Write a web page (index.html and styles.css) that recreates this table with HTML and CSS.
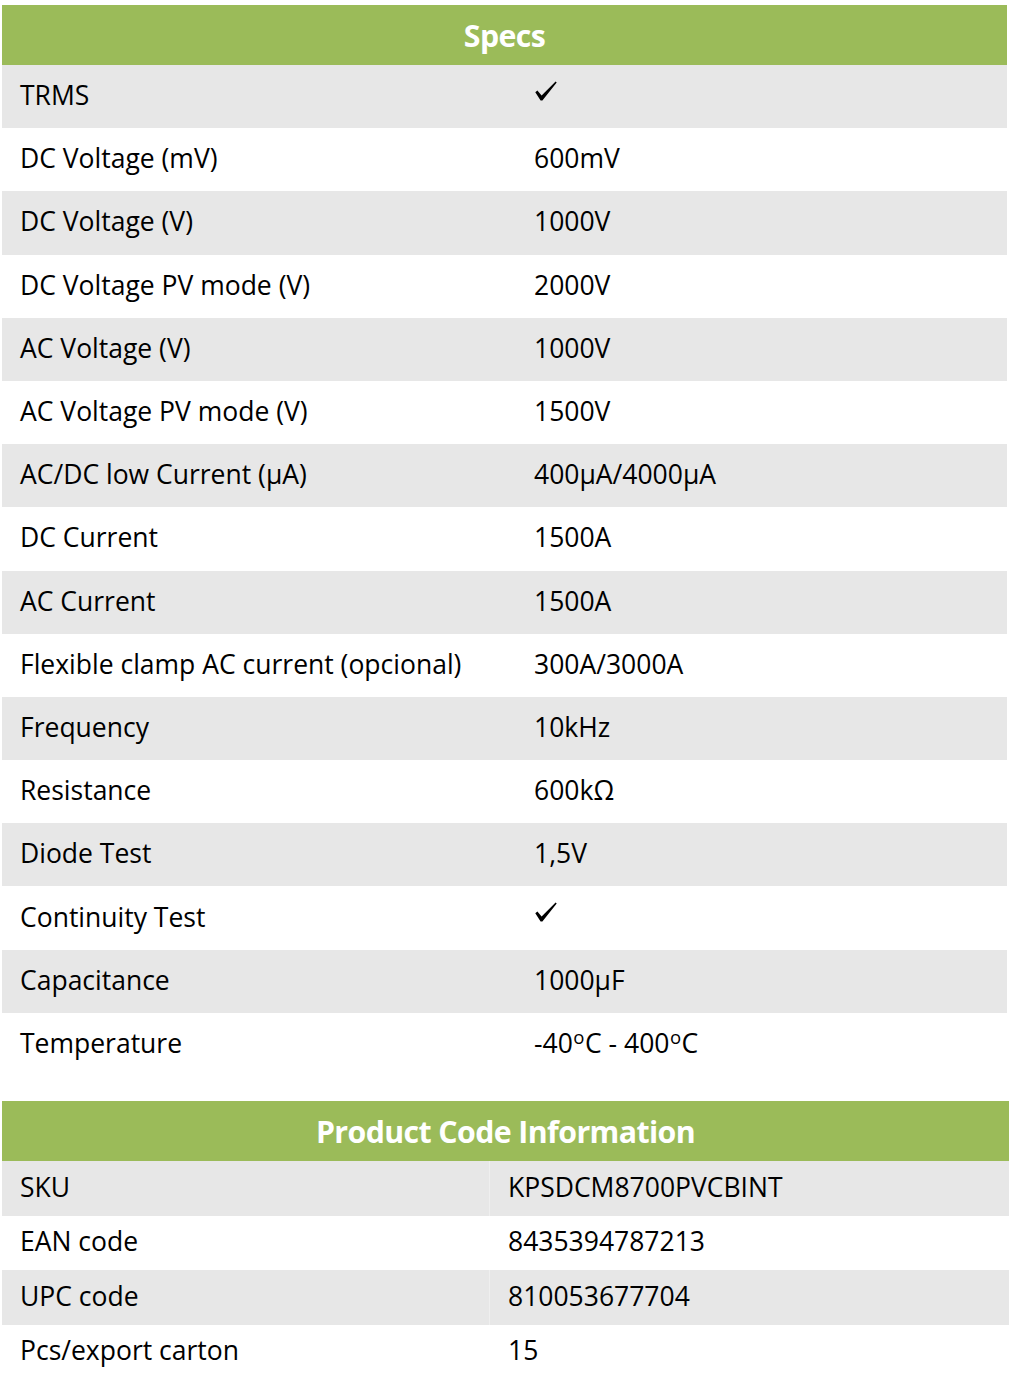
FILE: index.html
```html
<!DOCTYPE html>
<html>
<head>
<meta charset="utf-8">
<link rel="stylesheet" href="styles.css">
</head>
<body>
<section class="table specs">
  <div class="head">Specs</div>
  <div class="row alt"><div class="k">TRMS</div><div class="v"><svg class="check" viewBox="0 0 22 20" width="22" height="20"><path d="M0.3 11.2 L2.4 9.6 L6.6 14.6 L20.6 0.6 L21.7 1.6 L7.4 19.6 L5.6 19.6 Z"/></svg></div></div>
  <div class="row"><div class="k">DC Voltage (mV)</div><div class="v">600mV</div></div>
  <div class="row alt"><div class="k">DC Voltage (V)</div><div class="v">1000V</div></div>
  <div class="row"><div class="k">DC Voltage PV mode (V)</div><div class="v">2000V</div></div>
  <div class="row alt"><div class="k">AC Voltage (V)</div><div class="v">1000V</div></div>
  <div class="row"><div class="k">AC Voltage PV mode (V)</div><div class="v">1500V</div></div>
  <div class="row alt"><div class="k">AC/DC low Current (µA)</div><div class="v">400µA/4000µA</div></div>
  <div class="row"><div class="k">DC Current</div><div class="v">1500A</div></div>
  <div class="row alt"><div class="k">AC Current</div><div class="v">1500A</div></div>
  <div class="row"><div class="k">Flexible clamp AC current (opcional)</div><div class="v">300A/3000A</div></div>
  <div class="row alt"><div class="k">Frequency</div><div class="v">10kHz</div></div>
  <div class="row"><div class="k">Resistance</div><div class="v">600kΩ</div></div>
  <div class="row alt"><div class="k">Diode Test</div><div class="v">1,5V</div></div>
  <div class="row"><div class="k">Continuity Test</div><div class="v"><svg class="check" viewBox="0 0 22 20" width="22" height="20"><path d="M0.3 11.2 L2.4 9.6 L6.6 14.6 L20.6 0.6 L21.7 1.6 L7.4 19.6 L5.6 19.6 Z"/></svg></div></div>
  <div class="row alt"><div class="k">Capacitance</div><div class="v">1000µF</div></div>
  <div class="row"><div class="k">Temperature</div><div class="v"><span>-40<span class="deg">o</span>C - 400<span class="deg">o</span>C</span></div></div>
</section>
<section class="table codes">
  <div class="head">Product Code Information</div>
  <div class="row alt"><div class="k">SKU</div><div class="v">KPSDCM8700PVCBINT</div></div>
  <div class="row"><div class="k">EAN code</div><div class="v">8435394787213</div></div>
  <div class="row alt"><div class="k">UPC code</div><div class="v">810053677704</div></div>
  <div class="row"><div class="k">Pcs/export carton</div><div class="v">15</div></div>
</section>
</body>
</html>
```
FILE: styles.css
```css
html, body {
  margin: 0;
  padding: 0;
  background: #ffffff;
}
body {
  font-family: "Open Sans", "Noto Sans", sans-serif;
  color: #000000;
  padding-top: 5px;
}
.table {
  display: flex;
  flex-direction: column;
  margin-left: 2px;
}
.specs {
  width: 1005px;
}
.codes {
  width: 1007px;
  margin-top: 25px;
}
.head {
  height: 60px;
  background: #9bbb59;
  color: #ffffff;
  font-weight: 700;
  font-size: 30.3px;
  letter-spacing: -0.6px;
  display: flex;
  align-items: center;
  justify-content: center;
}
.row {
  display: grid;
  font-size: 26.5px;
}
.specs .row {
  height: 63.2px;
  grid-template-columns: 514px 1fr;
}
.codes .row {
  height: 54.5px;
  grid-template-columns: 487px 1fr;
}
.row.alt {
  background: #e7e7e7;
}
.k, .v {
  display: flex;
  align-items: center;
  padding-left: 18px;
  padding-bottom: 3px;
  white-space: pre;
}
.codes .v {
  border-left: 1px solid #efefef;
}
.codes .row:not(.alt) .v {
  border-left-color: transparent;
}
.check {
  display: block;
  fill: #000000;
  margin-left: 1px;
  margin-bottom: 9px;
}
.deg {
  font-size: 0.7em;
  vertical-align: 9px;
  margin: 0 0.5px;
}
```
